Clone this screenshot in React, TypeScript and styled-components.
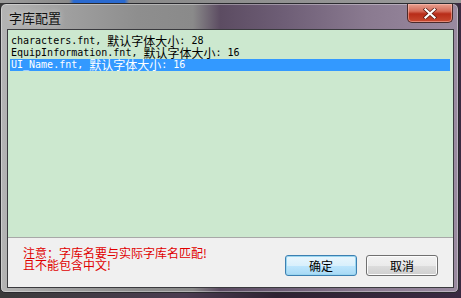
import React from "react";
import styled, { createGlobalStyle } from "styled-components";

const Global = createGlobalStyle`
  html, body { margin: 0; padding: 0; background: #2c2230; }
  body { font-family: "Noto Sans CJK SC", "Liberation Sans", sans-serif; }
`;

const Page = styled.div`
  width: 461px;
  height: 298px;
  overflow: hidden;
  background: linear-gradient(90deg, #3a3a3a 0%, #4a3c50 40%, #2e2232 60%, #3a2a42 100%);
  display: flex;
  flex-direction: column;
`;

const TopStrip = styled.div`
  height: 3px;
  flex: none;
  background: linear-gradient(90deg, #9a9a9a 0%, #8a8a8a 15%, #2a6ad0 16%, #2a6ad0 27%, #8a8a8a 28%, #9a9a9a 100%);
`;

const Window = styled.div`
  width: 459px;
  height: 290px;
  flex: none;
  box-sizing: border-box;
  border: 1px solid #2a2a2e;
  border-radius: 6px 6px 5px 5px;
  background: linear-gradient(90deg, #b4b4b4 0%, #a2a2a2 12%, #8e8e8e 30%, #8a8a8a 42%, #5c4c62 48%, #6e5e76 62%, #8a7a90 80%, #9a8aa0 100%);
  display: flex;
  flex-direction: column;
  padding: 0 4px 4px 6px;
  box-shadow: inset 0 0 0 1px rgba(255, 255, 255, 0.35);
`;

const TitleBar = styled.div`
  height: 25px;
  flex: none;
  display: flex;
  align-items: flex-start;
  justify-content: space-between;
`;

const Title = styled.span`
  font-family: "Noto Sans CJK SC", sans-serif;
  font-size: 13px;
  line-height: 13px;
  color: #101010;
  margin: 7px 0 0 2px;
  text-shadow: 0 0 6px rgba(255, 255, 255, 0.6);
`;

const CloseButton = styled.div`
  width: 46px;
  height: 19px;
  margin-right: 1px;
  box-sizing: border-box;
  border: 1px solid #4a2a2a;
  border-top: none;
  border-radius: 0 0 5px 5px;
  background: linear-gradient(180deg, #e8a090 0%, #d46a58 40%, #b82c18 55%, #c84a30 100%);
  box-shadow: inset 0 0 0 1px rgba(255, 200, 190, 0.5);
  display: flex;
  align-items: center;
  justify-content: center;
`;

const Client = styled.div`
  flex: 1;
  display: flex;
  flex-direction: column;
  border: 1px solid #3a3a3e;
  background: #f0f0f0;
`;

const List = styled.div`
  height: 202px;
  flex: none;
  background: #cce8cf;
  border-bottom: 1px solid #a8a8a8;
  padding: 5px 3px 0 2px;
  box-sizing: content-box;
`;

const Row = styled.div<{ $selected?: boolean }>`
  height: 12px;
  display: flex;
  align-items: center;
  padding-left: 1px;
  white-space: nowrap;
  overflow: visible;
  color: ${(p) => (p.$selected ? "#ffffff" : "#000000")};
  background: ${(p) => (p.$selected ? "#3399ff" : "transparent")};
`;

const Mono = styled.span`
  display: block;
  font-family: "DejaVu Sans Mono", "Liberation Mono", monospace;
  font-size: 10px;
  line-height: 12px;
  white-space: pre;
`;

const Cjk = styled.span`
  display: block;
  font-family: "Noto Sans CJK SC", sans-serif;
  font-size: 12px;
  line-height: 12px;
  margin-top: -1px;
`;

const Footer = styled.div`
  flex: 1;
  display: flex;
  align-items: flex-start;
  justify-content: space-between;
  padding: 9px 15px 0 15px;
`;

const Note = styled.div`
  display: flex;
  flex-direction: column;
`;

const NoteLine = styled.div`
  font-family: "Noto Sans CJK SC", sans-serif;
  font-size: 12px;
  line-height: 12px;
  height: 12px;
  color: #e00000;
  white-space: nowrap;
`;

const Buttons = styled.div`
  display: flex;
  gap: 9px;
  margin-top: 8px;
`;

const Button = styled.div<{ $focused?: boolean }>`
  width: 72px;
  height: 21px;
  box-sizing: border-box;
  border: 1px solid ${(p) => (p.$focused ? "#3c7fb1" : "#707070")};
  border-radius: 3px;
  background: ${(p) =>
    p.$focused
      ? "linear-gradient(180deg, #eaf6fd 0%, #d9f0fc 50%, #bee6fd 51%, #a7d9f5 100%)"
      : "linear-gradient(180deg, #f2f2f2 0%, #ebebeb 50%, #dddddd 51%, #cfcfcf 100%)"};
  box-shadow: ${(p) => (p.$focused ? "inset 0 0 0 1px #9ad6f0" : "inset 0 0 0 1px #fcfcfc")};
  display: flex;
  align-items: center;
  justify-content: center;
  font-family: "Noto Sans CJK SC", sans-serif;
  font-size: 12px;
  line-height: 12px;
  color: #000;
`;

const rows = [
  { name: "characters.fnt, ", size: "28" },
  { name: "EquipInformation.fnt, ", size: "16" },
  { name: "UI_Name.fnt, ", size: "16", selected: true },
];

export default function App() {
  return (
    <>
      <Global />
      <Page>
        <TopStrip />
        <Window>
          <TitleBar>
            <Title>字库配置</Title>
            <CloseButton>
              <svg width="14" height="11" viewBox="0 0 14 11">
                <path d="M2.5 1.5 L11.5 9.5 M11.5 1.5 L2.5 9.5" stroke="#5a1a10" strokeWidth="3.6" strokeLinecap="square" />
                <path d="M2.5 1.5 L11.5 9.5 M11.5 1.5 L2.5 9.5" stroke="#ffffff" strokeWidth="2.2" strokeLinecap="square" />
              </svg>
            </CloseButton>
          </TitleBar>
          <Client>
            <List>
              {rows.map((r) => (
                <Row key={r.name} $selected={r.selected}>
                  <Mono>{r.name}</Mono>
                  <Cjk>默认字体大小</Cjk>
                  <Mono>: {r.size}</Mono>
                </Row>
              ))}
            </List>
            <Footer>
              <Note>
                <NoteLine>注意：字库名要与实际字库名匹配!</NoteLine>
                <NoteLine>且不能包含中文!</NoteLine>
              </Note>
              <Buttons>
                <Button $focused>确定</Button>
                <Button>取消</Button>
              </Buttons>
            </Footer>
          </Client>
        </Window>
      </Page>
    </>
  );
}
